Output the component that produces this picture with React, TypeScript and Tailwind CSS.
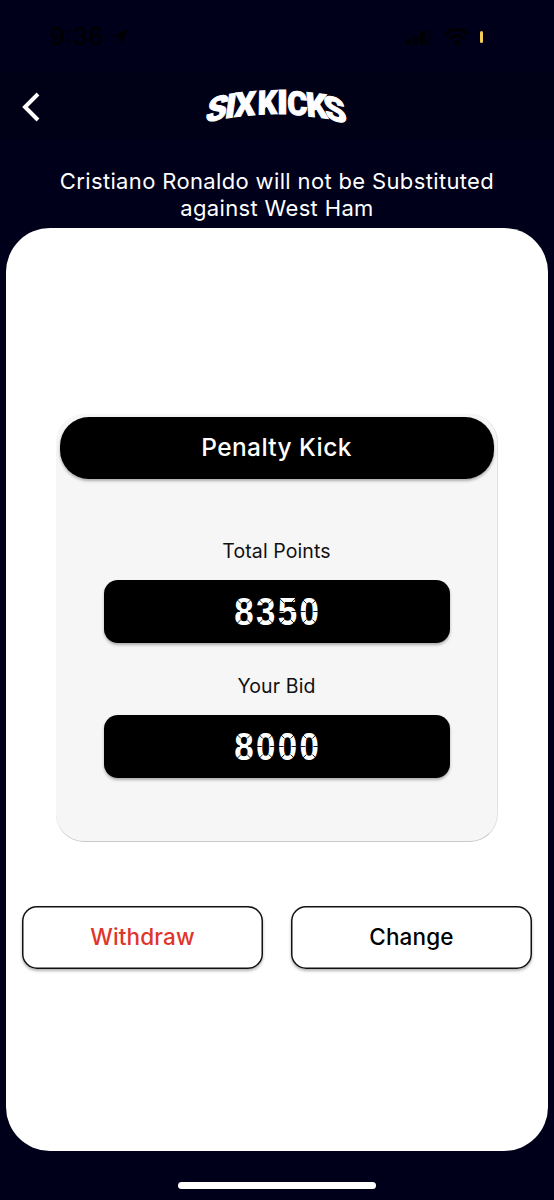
import type { ReactNode } from "react";

// one matrix per letter gives the arched wordmark
const logoLetters = [
  { char: "S", width: 21, matrix: "matrix(1 -0.24 -0.2 1.04 2.5 41)" },
  { char: "I", width: 10.5, matrix: "matrix(1 -0.15 -0.14 1.02 22 36.5)" },
  { char: "X", width: 21, matrix: "matrix(1 -0.1 -0.06 1.02 32 35)" },
  { char: "K", width: 19.5, matrix: "matrix(1 -0.04 -0.02 1 55.5 32.5)" },
  { char: "I", width: 11, matrix: "matrix(1 0 0 1 75 32)" },
  { char: "C", width: 20, matrix: "matrix(1 0.05 0.02 1 85.5 32.5)" },
  { char: "K", width: 21, matrix: "matrix(1 0.12 0.08 1.02 105 34)" },
  { char: "S", width: 21.5, matrix: "matrix(1 0.22 0.2 1.04 124.5 37)" },
];

function Logo() {
  return (
    <svg
      width="150"
      height="50"
      viewBox="0 0 150 50"
      fill="#fff"
      stroke="#fff"
      strokeWidth="1"
      className="overflow-visible"
    >
      {logoLetters.map((letter, i) => (
        <text
          key={i}
          transform={letter.matrix}
          textLength={letter.width}
          lengthAdjust="spacingAndGlyphs"
          className="font-['Roboto',sans-serif] text-[33px] font-black"
        >
          {letter.char}
        </text>
      ))}
    </svg>
  );
}

function StatusBar() {
  return (
    <div className="flex h-[73px] items-center justify-between pl-[50px] pr-[40px] text-[#000004]">
      <div className="flex items-center gap-[9px]">
        <span className="w-[53px] font-['Inter',sans-serif] text-[24px] font-semibold">9:36</span>
        <svg width="18" height="18" viewBox="0 0 18 18" fill="currentColor">
          <path d="M17 0.5 9 17 8 9 0.5 8Z" />
        </svg>
      </div>
      <div className="flex items-center">
        <svg width="26" height="16" viewBox="0 0 26 16" fill="currentColor">
          <rect x="0" y="10" width="5" height="6" rx="1" />
          <rect x="7" y="6" width="5" height="10" rx="1" />
          <rect x="14" y="2" width="5" height="14" rx="1" />
          <rect x="21" y="0" width="5" height="16" rx="1" opacity="0.3" />
        </svg>
        <svg className="ml-3" width="26" height="18" viewBox="0 0 26 18" fill="none" stroke="currentColor" strokeWidth="3.4">
          <path d="M1.500 6Q13-3 24.500 6M5.500 11q7.500-7 15 0" />
          <path d="M9 14q4-3.500 8 0l-4 4Z" fill="currentColor" stroke="none" />
        </svg>
        <div className="ml-2 flex h-[18px] w-[36px] items-center rounded-md border border-[#000016] pl-px">
          <div className="h-3 w-[3px] rounded-xs bg-[#f5cd55]" />
        </div>
      </div>
    </div>
  );
}

function ScoreBox({ label, value }: { label: string; value: string }) {
  return (
    <div className="flex flex-col items-center">
      <p className="h-[30px] text-[19.5px] leading-[30px] tracking-[0.1px] text-[#111]">{label}</p>
      <div className="mt-[14px] flex h-[63px] w-[346px] items-center justify-center rounded-[14px] bg-black shadow-[0_2px_3px_rgba(0,0,0,0.3)]">
        <svg width="86" height="52" viewBox="0 0 86 52" className="overflow-visible">
          {value.split("").map((digit, i) => (
            <g key={i} transform={`translate(${i * 21.8 + 1} 12.5)`}>
              <text
                y="27.7"
                x="-0.8"
                textLength="19.4"
                lengthAdjust="spacingAndGlyphs"
                fill="#fff"
                className="font-['Liberation_Sans',Arial,sans-serif] text-[39.5px] font-bold"
              >
                {digit}
              </text>
              {/* gaps between the display segments */}
              <path
                d="M0 0l6 6M18 0l-6 6M0 28l6-6M18 28l-6-6M0 14h5M13 14h5"
                stroke="#000"
                strokeWidth="0.9"
              />
            </g>
          ))}
        </svg>
      </div>
    </div>
  );
}

function ActionButton({ className, children }: { className: string; children: ReactNode }) {
  return (
    <button
      className={`h-[63px] rounded-[15px] bg-white shadow-[inset_0_0_0_1.5px_#111,0_2px_3px_rgba(0,0,0,0.3)] ${className}`}
    >
      {children}
    </button>
  );
}

export default function App() {
  return (
    <div className="flex h-[1200px] w-[554px] flex-col bg-[#00001b] font-['Inter',sans-serif]">
      <StatusBar />
      <header className="grid h-[67px] grid-cols-[1fr_150px_1fr] items-center bg-[#000017]">
        <button className="ml-[22px] w-fit">
          <svg width="20" height="30" viewBox="0 0 20 30" fill="none" stroke="#fff" strokeWidth="4">
            <path d="M16 2 3 15l13 13" />
          </svg>
        </button>
        <Logo />
      </header>
      <h1 className="mt-[28px] text-center text-[22px] leading-[27px] tracking-[0.35px] text-white">
        Cristiano Ronaldo will not be Substituted
        <br />
        against West Ham
      </h1>

      <main className="mx-[6px] mt-[5.5px] h-[923px] rounded-[44px] bg-white pt-[186px]">
        <section className="mx-auto flex h-[428px] w-[442px] flex-col items-center rounded-[28px] border-r border-b border-r-[#e2e2e2] border-b-[#c8c8c8] bg-[#f6f6f6] pt-[3px]">
          <h2 className="flex h-[62px] w-[434px] items-center justify-center rounded-[29px] bg-black text-[24.5px] font-medium tracking-[0.4px] text-white shadow-[0_2px_3px_rgba(0,0,0,0.3)]">
            Penalty Kick
          </h2>
          <div className="mt-[57px] flex flex-col gap-[28px]">
            <ScoreBox label="Total Points" value="8350" />
            <ScoreBox label="Your Bid" value="8000" />
          </div>
        </section>

        <div className="mt-[64px] grid grid-cols-2 gap-[28px] px-[16px] text-[22.5px] font-medium tracking-[0.15px]">
          <ActionButton className="text-[#e0352b]">Withdraw</ActionButton>
          <ActionButton className="text-black">Change</ActionButton>
        </div>
      </main>

      <div className="mx-auto mt-[31px] h-[7px] w-[198px] rounded-full bg-white" />
    </div>
  );
}
